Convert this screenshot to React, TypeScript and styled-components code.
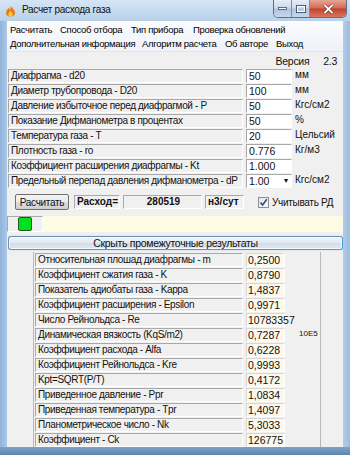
import React from "react";
import styled, { createGlobalStyle, css } from "styled-components";

interface Field {
  label: string;
  value: string;
  unit: string;
  select?: boolean;
}

interface Result {
  label: string;
  value: string;
  note?: string;
}

interface Menu {
  title: string;
  width: number;
}

const fields: Field[] = [
  { label: "Диафрагма  - d20", value: "50", unit: "мм" },
  { label: "Диаметр трубопровода  - D20", value: "100", unit: "мм" },
  { label: "Давление избыточное перед диафрагмой - P", value: "50", unit: "Кгс/см2" },
  { label: "Показание Дифманометра в процентах", value: "50", unit: "%" },
  { label: "Температура газа - T", value: "20", unit: "Цельсий" },
  { label: "Плотность газа - ro", value: "0.776", unit: "Кг/м3" },
  { label: "Коэффициент расширения диафрагмы - Kt", value: "1.000", unit: "" },
  { label: "Предельный перепад давления дифманометра - dP", value: "1.00", unit: "Кгс/см2", select: true },
];

const results: Result[] = [
  { label: "Относительная плошад диафрагмы - m", value: "0,2500" },
  { label: "Коэффициент сжатия газа - K", value: "0,8790" },
  { label: "Показатель адиобаты газа - Kappa", value: "1,4837" },
  { label: "Коэффициент расширения - Epsilon", value: "0,9971" },
  { label: "Число Рейнольдса  -  Re", value: "10783357" },
  { label: "Динамическая вязкость (KqS/m2)", value: "0,7287", note: "10E5" },
  { label: "Коэффициент расхода - Alfa", value: "0,6228" },
  { label: "Коэффициент Рейнольдса - Kre", value: "0,9993" },
  { label: "Kpt=SQRT(P/T)", value: "0,4172" },
  { label: "Приведенное давление - Ppr", value: "1,0834" },
  { label: "Приведенная температура - Tpr", value: "1,4097" },
  { label: "Планометрическое число - Nk", value: "5,3033" },
  { label: "Коэффициент  - Ck", value: "126775" },
];

const menuTop: Menu[] = [
  { title: "Расчитать", width: 50 },
  { title: "Способ отбора", width: 71 },
  { title: "Тип прибора", width: 62 },
  { title: "Проверка обновлений", width: 100 },
];
const menuBottom: Menu[] = [
  { title: "Дополнительная информация", width: 132 },
  { title: "Алгоритм расчета", width: 83 },
  { title: "Об авторе", width: 51 },
  { title: "Выход", width: 40 },
];

const App = () => {
  return (
    <Window>
      <GlobalStyle />
      <TitleBar>
        <AppIcon width="11" height="12" viewBox="0 0 11 12">
          <path d="M5.5 0.5 C7 3 10 4.5 10 8 C10 10.5 8 11.5 5.5 11.5 C3 11.5 1 10.5 1 8 C1 5.5 3 4.5 3.5 2.5 C4.5 3.5 4.8 4.5 4.8 5.5 C5.8 4 5.8 2 5.5 0.5 Z" fill="#f07a12" />
          <path d="M5.5 6 C6.8 7.3 7.6 8.2 7.6 9.4 C7.6 10.6 6.7 11.2 5.5 11.2 C4.3 11.2 3.4 10.6 3.4 9.4 C3.4 8.2 4.5 7.5 5.5 6 Z" fill="#ffd23c" />
        </AppIcon>
        <Caption>Расчет расхода газа</Caption>
        <Controls>
          <CtrlButton>
            <svg width="9" height="3" viewBox="0 0 9 3">
              <rect x="0.5" y="0.5" width="8" height="2" fill="#fff" stroke="#3a4f68" strokeWidth="0.8" />
            </svg>
          </CtrlButton>
          <CtrlButton>
            <svg width="10" height="8" viewBox="0 0 10 8">
              <rect x="0.5" y="0.5" width="9" height="7" fill="none" stroke="#3a4f68" strokeWidth="1" />
              <rect x="1.5" y="1.5" width="7" height="5" fill="none" stroke="#fff" strokeWidth="1.2" />
            </svg>
          </CtrlButton>
          <CloseButton>
            <svg width="11" height="10" viewBox="0 0 11 10">
              <path d="M1.5 1 L9.5 9 M9.5 1 L1.5 9" stroke="#5a1d1d" strokeWidth="3" />
              <path d="M1.5 1 L9.5 9 M9.5 1 L1.5 9" stroke="#fff" strokeWidth="1.8" />
            </svg>
          </CloseButton>
        </Controls>
      </TitleBar>

      <Client>
        <MenuBar>
          <MenuRow>
            {menuTop.map((m) => (
              <MenuItem key={m.title} $width={m.width}>
                {m.title}
              </MenuItem>
            ))}
          </MenuRow>
          <MenuRow>
            {menuBottom.map((m) => (
              <MenuItem key={m.title} $width={m.width}>
                {m.title}
              </MenuItem>
            ))}
          </MenuRow>
        </MenuBar>

        <VersionRow>
          <span>Версия</span>
          <span>2.3</span>
        </VersionRow>

        <FieldList>
          {fields.map((f) => (
            <FieldRow key={f.label}>
              <LabelBox>{f.label}</LabelBox>
              <InputBox>
                {f.value}
                {f.select && <Arrow>▾</Arrow>}
              </InputBox>
              <Unit>{f.unit}</Unit>
            </FieldRow>
          ))}
        </FieldList>

        <ActionRow>
          <CalcButton>Расчитать</CalcButton>
          <BoldBox $width={46}>Расход=</BoldBox>
          <BoldBox $width={79} $center>
            280519
          </BoldBox>
          <BoldBox $width={39}>н3/сут</BoldBox>
          <Check>
            <CheckBox>
              <svg width="9" height="9" viewBox="0 0 9 9">
                <path d="M1.5 4.5 L3.6 7 L7.8 1.2" fill="none" stroke="#2c4a9a" strokeWidth="1.6" />
              </svg>
            </CheckBox>
            Учитывать РД
          </Check>
        </ActionRow>

        <StatusRow>
          <LampBox>
            <Lamp />
          </LampBox>
          <MessageArea />
        </StatusRow>

        <ToggleButton>Скрыть промежуточные результаты</ToggleButton>

        <ResultPanel>
          {results.map((r) => (
            <ResultRow key={r.label}>
              <LabelBox>{r.label}</LabelBox>
              <ResultValue>{r.value}</ResultValue>
              <Note>{r.note}</Note>
            </ResultRow>
          ))}
        </ResultPanel>
      </Client>
      <BottomFrame />
    </Window>
  );
};

export default App;

const GlobalStyle = createGlobalStyle`
  body {
    margin: 0;
    background: #c9dcef;
    font-family: "Liberation Sans", Arial, sans-serif;
  }
`;

const sunken = css`
  border: 1px solid;
  border-color: #a8a8a8 #ffffff #ffffff #a8a8a8;
`;

const Window = styled.div`
  width: 350px;
  height: 455px;
  display: flex;
  flex-direction: column;
  overflow: hidden;
  background: linear-gradient(90deg, #8fb3da 0%, #bcd3ec 3%, #cadcf0 50%, #bcd3ec 97%, #9dbde0 100%);
`;

const TitleBar = styled.div`
  height: 21px;
  flex-shrink: 0;
  display: flex;
  align-items: flex-start;
  padding-left: 5px;
  background: linear-gradient(180deg, #d6e5f5 0%, #c3d8ee 60%, #b8d0ea 100%);
`;

const AppIcon = styled.svg`
  margin-top: 5px;
`;

const Caption = styled.div`
  margin: 4px 0 0 6px;
  font-size: 10px;
  letter-spacing: -0.3px;
  color: #111;
  flex: 1;
`;

const Controls = styled.div`
  display: flex;
  margin-right: 3px;
  border: 1px solid #5b6f8a;
  border-top: none;
  border-radius: 0 0 5px 5px;
  overflow: hidden;
`;

const CtrlButton = styled.div`
  width: 17px;
  height: 17px;
  display: flex;
  align-items: center;
  justify-content: center;
  background: linear-gradient(180deg, #e6eef8 0%, #c9d8ea 48%, #aec3dc 52%, #c7d8ec 100%);
  border-right: 1px solid #7d8ea6;
`;

const CloseButton = styled.div`
  width: 36px;
  height: 17px;
  display: flex;
  align-items: center;
  justify-content: center;
  background: linear-gradient(180deg, #e7a593 0%, #d06a55 48%, #c1432c 52%, #d9775d 100%);
`;

const Client = styled.div`
  flex: 1;
  margin: 0 7px;
  background: #f0f0f0;
  display: flex;
  flex-direction: column;
  overflow: hidden;
  font-size: 10px;
  color: #111;
`;

const MenuBar = styled.div`
  height: 29px;
  padding-top: 1px;
  background: linear-gradient(180deg, #fbfcfe 0%, #eef2f9 100%);
  border-bottom: 1px solid #e2e6ee;
`;

const MenuRow = styled.div`
  height: 14px;
  display: flex;
  align-items: center;
  padding-left: 3px;
`;

const MenuItem = styled.span<{ $width: number }>`
  width: ${(p) => p.$width}px;
  flex-shrink: 0;
  white-space: nowrap;
  font-size: 9.5px;
  letter-spacing: -0.3px;
  color: #000;
`;

const VersionRow = styled.div`
  height: 17px;
  display: flex;
  justify-content: flex-end;
  align-items: center;
  gap: 14px;
  padding-right: 6px;
  font-size: 10.5px;
  letter-spacing: -0.3px;
`;

const FieldList = styled.div`
  display: flex;
  flex-direction: column;
  gap: 2px;
  padding-left: 1px;
`;

const FieldRow = styled.div`
  display: grid;
  grid-template-columns: 235px 46px auto;
  column-gap: 3px;
  height: 13px;
  align-items: stretch;
`;

const LabelBox = styled.div`
  ${sunken};
  background: #f0f0f0;
  padding-left: 2px;
  line-height: 11px;
  letter-spacing: -0.35px;
  white-space: nowrap;
  overflow: hidden;
`;

const InputBox = styled.div`
  ${sunken};
  background: #ffffff;
  padding-left: 2px;
  line-height: 12px;
  font-size: 10.5px;
  position: relative;
`;

const Arrow = styled.span`
  position: absolute;
  right: 3px;
  top: 0;
  font-size: 8px;
`;

const Unit = styled.div`
  line-height: 11px;
  font-size: 10px;
`;

const ActionRow = styled.div`
  display: flex;
  align-items: center;
  height: 16px;
  margin-top: 7px;
  padding-left: 8px;
  gap: 3px;
`;

const CalcButton = styled.div`
  width: 52px;
  height: 14px;
  border: 1px solid #707070;
  border-radius: 2px;
  background: linear-gradient(180deg, #f4f4f4 0%, #e9e9e9 50%, #dcdcdc 52%, #d0d0d0 100%);
  display: flex;
  align-items: center;
  justify-content: center;
  letter-spacing: -0.3px;
  margin-right: 2px;
`;

const BoldBox = styled.div<{ $width: number; $center?: boolean }>`
  ${sunken};
  width: ${(p) => p.$width}px;
  height: 14px;
  box-sizing: border-box;
  font-weight: bold;
  font-size: 10px;
  line-height: 12px;
  padding-left: 2px;
  text-align: ${(p) => (p.$center ? "center" : "left")};
`;

const Check = styled.div`
  display: flex;
  align-items: center;
  gap: 3px;
  margin-left: 11px;
  letter-spacing: -0.3px;
`;

const CheckBox = styled.div`
  width: 9px;
  height: 9px;
  border: 1px solid #8e8f8f;
  background: linear-gradient(135deg, #e4e4e4, #fbfbfb);
  display: flex;
  align-items: center;
  justify-content: center;
`;

const StatusRow = styled.div`
  display: flex;
  height: 16px;
  margin-top: 6px;
`;

const LampBox = styled.div`
  ${sunken};
  width: 34px;
  display: flex;
  align-items: center;
  justify-content: center;
  background: #f0f0f0;
`;

const Lamp = styled.div`
  width: 12px;
  height: 12px;
  background: #00e21c;
  border: 1px solid #1a5a1a;
  border-radius: 2px;
`;

const MessageArea = styled.div`
  flex: 1;
  background: #fdfbe3;
`;

const ToggleButton = styled.div`
  height: 12px;
  margin: 4px 0 0 1px;
  border: 1px solid #6f8fae;
  border-right-color: #3d9bd8;
  border-radius: 3px;
  background: linear-gradient(180deg, #eef3f9 0%, #e2e9f2 50%, #d2dde9 52%, #dfe7f0 100%);
  box-shadow: inset 0 0 0 1px #f6f9fc, 2px 0 2px rgba(80, 170, 230, 0.35);
  text-align: center;
  line-height: 12px;
  font-size: 10.5px;
  letter-spacing: -0.3px;
`;

const ResultPanel = styled.div`
  flex: 1;
  margin: 2px 0 0 26px;
  width: 285px;
  border-left: 1px solid #b8b8b8;
  border-right: 1px solid #b8b8b8;
  padding: 1px 0 0 1px;
  display: flex;
  flex-direction: column;
  gap: 2px;
`;

const ResultRow = styled.div`
  display: grid;
  grid-template-columns: 208px 39px auto;
  column-gap: 3px;
  height: 13px;
`;

const ResultValue = styled.div`
  border: 1px solid;
  border-color: #d8d8d8 #ffffff #ffffff #d8d8d8;
  background: #fdf8ea;
  padding-left: 1px;
  line-height: 12px;
  font-size: 10.5px;
`;

const Note = styled.div`
  font-size: 8px;
  line-height: 12px;
  padding-left: 11px;
`;

const BottomFrame = styled.div`
  height: 8px;
  flex-shrink: 0;
  background: linear-gradient(180deg, #7fa3c6 0%, #5e86ad 100%);
`;
